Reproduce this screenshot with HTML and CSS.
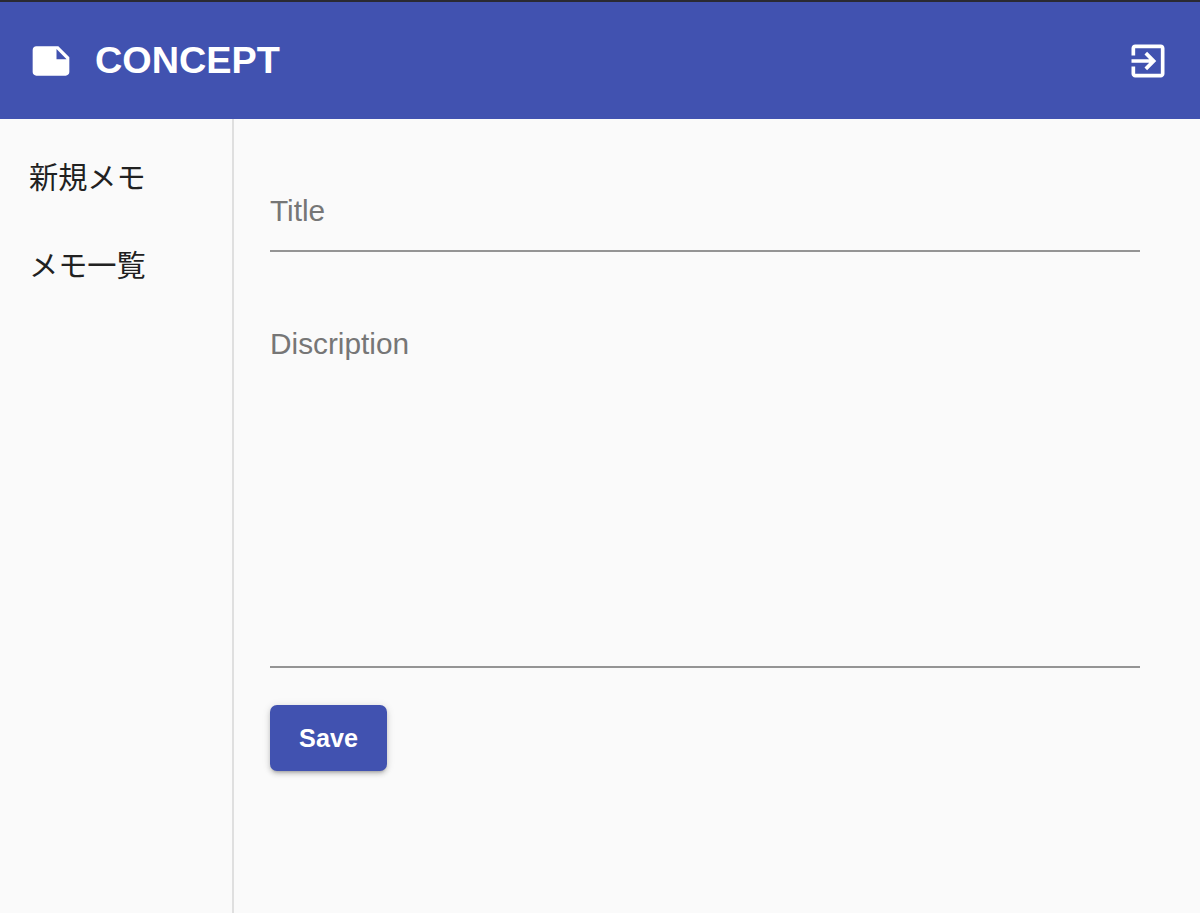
FILE: index.html
```html
<!DOCTYPE html>
<html lang="ja">
<head>
<meta charset="utf-8">
<title>CONCEPT</title>
<link rel="stylesheet" href="styles.css">
</head>
<body>
<div class="app">
  <header class="appbar">
    <div class="brand">
      <svg class="note-icon" viewBox="0 0 24 24" aria-hidden="true"><path d="M22 10l-6-6H4c-1.1 0-2 .9-2 2v12.01c0 1.1.9 1.99 2 1.99l16-.01c1.1 0 2-.89 2-1.99v-8zm-7-4.5l5.5 5.5H15V5.5z"/></svg>
      <h1 class="brand-name">CONCEPT</h1>
    </div>
    <svg class="exit-icon" viewBox="0 0 24 24" aria-hidden="true"><path d="M10.09 15.59L11.5 17l5-5-5-5-1.41 1.41L12.67 11H3v2h9.67l-2.58 2.59zM19 3H5c-1.11 0-2 .9-2 2v4h2V5h14v14H5v-4H3v4c0 1.1.89 2 2 2h14c1.1 0 2-.9 2-2V5c0-1.1-.9-2-2-2z"/></svg>
  </header>
  <div class="body">
    <nav class="sidebar">
      <a class="nav-item">新規メモ</a>
      <a class="nav-item">メモ一覧</a>
    </nav>
    <main class="content">
      <form class="form">
        <input class="field title-field" type="text" placeholder="Title">
        <textarea class="field desc-field" placeholder="Discription"></textarea>
        <button class="save" type="button">Save</button>
      </form>
    </main>
  </div>
</div>
</body>
</html>
```
FILE: styles.css
```css
* { box-sizing: border-box; }
html, body { margin: 0; height: 100%; }
body {
  background: #fafafa;
  font-family: "Liberation Sans", Arial, "Noto Sans CJK JP", sans-serif;
  overflow: hidden;
}
.app { height: 913px; display: flex; flex-direction: column; }
.appbar {
  height: 119px;
  flex: none;
  background: #4152b0;
  border-top: 2px solid #2a2a32;
  display: flex;
  align-items: center;
  justify-content: space-between;
  padding: 0 30px 0 29px;
  color: #fff;
}
.brand { display: flex; align-items: center; gap: 22px; }
.note-icon { width: 44px; height: 44px; fill: #fff; display: block; }
.exit-icon { width: 44px; height: 44px; fill: #fff; display: block; }
.brand-name {
  margin: 0;
  font-size: 37.8px;
  font-weight: 700;
  line-height: 1;
}
.body { flex: 1; display: flex; min-height: 0; }
.sidebar {
  width: 234px;
  flex: none;
  border-right: 2px solid #dfdfdf;
  padding: 12px 0 0 29px;
  display: flex;
  flex-direction: column;
}
.nav-item {
  height: 88px;
  display: flex;
  align-items: center;
  font-family: "Noto Sans CJK JP", sans-serif;
  font-size: 29.2px;
  color: #212121;
}
.content { flex: 1; padding: 0 60px 0 36px; }
.form { display: flex; flex-direction: column; align-items: flex-start; }
.field {
  display: block;
  width: 100%;
  border: 0;
  border-bottom: 2px solid #949494;
  background: transparent;
  padding: 0;
  margin: 0;
  font-family: inherit;
  font-size: 29.8px;
  line-height: 34px;
  color: #212121;
  outline: none;
}
.field::placeholder { color: #767676; opacity: 1; }
.title-field { height: 133px; padding-bottom: 6px; padding-top: 59px; }
.desc-field {
  height: 416px;
  padding-top: 75px;
  resize: none;
  overflow: hidden;
}
.save {
  margin-top: 37px;
  width: 117px;
  height: 66px;
  border: 0;
  border-radius: 7px;
  background: #4152b0;
  color: #fff;
  font-family: inherit;
  font-size: 25.2px;
  font-weight: 700;
  box-shadow: 0 3px 3px -2px rgba(0,0,0,.2), 0 3px 5px 0 rgba(0,0,0,.14), 0 1px 9px 0 rgba(0,0,0,.12);
}
```
